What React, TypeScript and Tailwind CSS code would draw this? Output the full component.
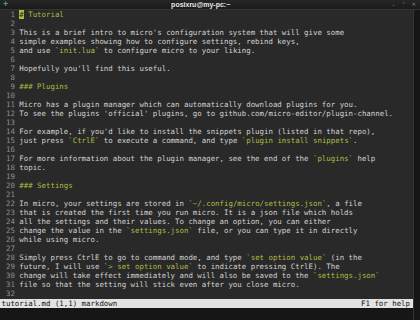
import React from 'react';

type Seg = [string, 'n' | 'h' | 'c'];

// markdown source shown in the editor, split into coloured segments
const lines: Seg[][] = [
    [['#', 'c'], [' Tutorial', 'h']],
    [],
    [['This is a brief intro to micro\'s configuration system that will give some', 'n']],
    [['simple examples showing how to configure settings, rebind keys,', 'n']],
    [['and use ', 'n'], ['`init.lua`', 'h'], [' to configure micro to your liking.', 'n']],
    [],
    [['Hopefully you\'ll find this useful.', 'n']],
    [],
    [['### Plugins', 'h']],
    [],
    [['Micro has a plugin manager which can automatically download plugins for you.', 'n']],
    [['To see the plugins \'official\' plugins, go to github.com/micro-editor/plugin-channel.', 'n']],
    [],
    [['For example, if you\'d like to install the snippets plugin (listed in that repo),', 'n']],
    [['just press ', 'n'], ['`CtrlE`', 'h'], [' to execute a command, and type ', 'n'], ['`plugin install snippets`', 'h'], ['.', 'n']],
    [],
    [['For more information about the plugin manager, see the end of the ', 'n'], ['`plugins`', 'h'], [' help', 'n']],
    [['topic.', 'n']],
    [],
    [['### Settings', 'h']],
    [],
    [['In micro, your settings are stored in ', 'n'], ['`~/.config/micro/settings.json`', 'h'], [', a file', 'n']],
    [['that is created the first time you run micro. It is a json file which holds', 'n']],
    [['all the settings and their values. To change an option, you can either', 'n']],
    [['change the value in the ', 'n'], ['`settings.json`', 'h'], [' file, or you can type it in directly', 'n']],
    [['while using micro.', 'n']],
    [],
    [['Simply press CtrlE to go to command mode, and type ', 'n'], ['`set option value`', 'h'], [' (in the', 'n']],
    [['future, I will use ', 'n'], ['`> set option value`', 'h'], [' to indicate pressing CtrlE). The', 'n']],
    [['change will take effect immediately and will also be saved to the ', 'n'], ['`settings.json`', 'h']],
    [['file so that the setting will stick even after you close micro.', 'n']],
    [],
];

const segClass = {
    n: 'text-[#d2d2d2]',
    h: 'text-[#b2ba42]',
    c: 'bg-[#b2ba42] text-[#2a2a2a]',
};

export default function App() {
    return (
        <div className="w-[420px] h-[320px] flex flex-col bg-[#161616] overflow-hidden">
            {/* Window title bar */}
            <div className="h-[10px] flex items-center bg-gradient-to-b from-[#262626] to-[#1a1a1a] border-b border-[#353535] relative">
                <span className="w-[10px] pl-[3px] text-[9px] leading-[9px] text-[#4f9a86] font-['Liberation_Sans',sans-serif] font-bold">+</span>
                <div className="flex-1 text-center text-[7px] leading-[9px] font-bold text-[#e6e6e6] font-['Liberation_Sans',sans-serif]">
                    posixru@my-pc:~
                </div>
                <div className="flex items-center gap-[6px] pr-[4px] text-[5px] leading-[5px] text-[#8a8a8a] font-['DejaVu_Sans',sans-serif]">
                    <span>⌄</span>
                    <span>⌃</span>
                    <span className="text-[#7c9a80]">✕</span>
                </div>
            </div>

            {/* Editor + terminal margin */}
            <div className="flex flex-1 min-h-0">
                <div className="w-[413px] flex flex-col bg-[#292929] font-['DejaVu_Sans_Mono',monospace] text-[7.4px] leading-[9px] whitespace-pre">
                    <div className="flex-1 pt-[0px]">
                        {lines.map((segs, i) => (
                            <div key={i} className="flex h-[9px] pl-[1.5px]">
                                <span className="w-[17.8px] text-[#8e8e8e]">{String(i + 1).padStart(3, ' ')}</span>
                                <span>
                                    {segs.map(([text, kind], j) => (
                                        <span key={j} className={segClass[kind]}>{text}</span>
                                    ))}
                                </span>
                            </div>
                        ))}
                    </div>
                    {/* Status line */}
                    <div className="h-[9px] flex justify-between bg-[#e2e2e2] text-[#111] pl-[1.5px] pr-[3px]">
                        <span>tutorial.md (1,1) markdown</span>
                        <span>F1 for help</span>
                    </div>
                    <div className="h-[12px] bg-[#161616]" />
                </div>
                <div className="flex-1 bg-[#161616] border-l border-[#353535]" />
            </div>
        </div>
    );
}
